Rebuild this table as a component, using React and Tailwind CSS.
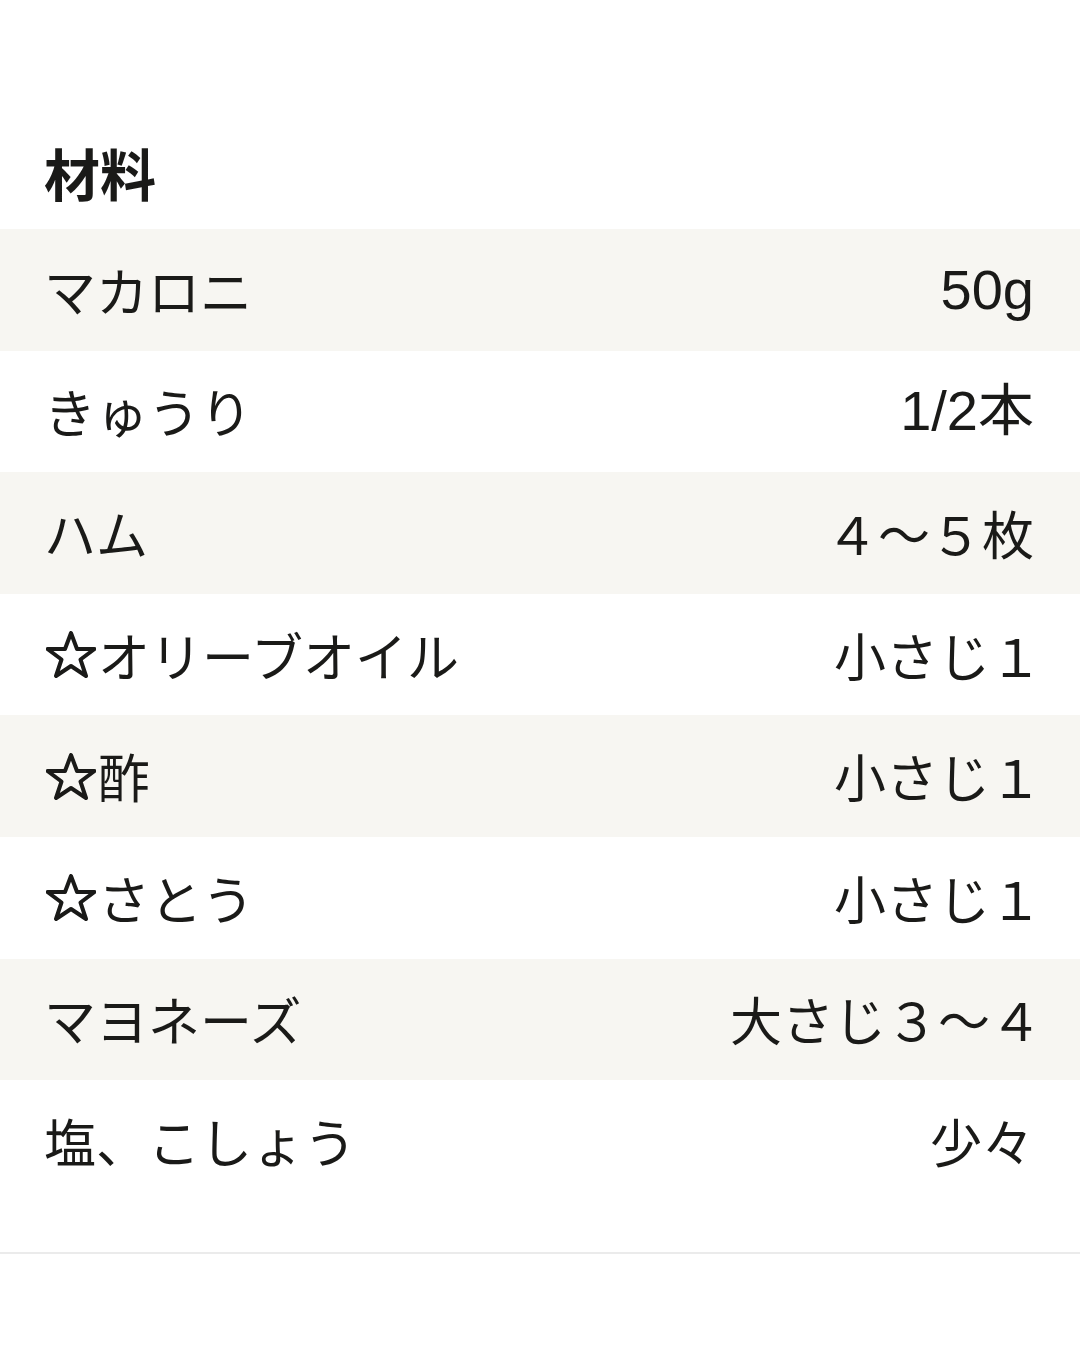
import React from "react";

const rows = [
  { name: "マカロニ", qty: "50g", latin: true },
  { name: "きゅうり", qty: "1/2本", latin: true },
  { name: "ハム", qty: "４～５枚" },
  { name: "オリーブオイル", qty: "小さじ１", star: true, shift: true },
  { name: "酢", qty: "小さじ１", star: true, shift: true },
  { name: "さとう", qty: "小さじ１", star: true, shift: true },
  { name: "マヨネーズ", qty: "大さじ３～４", shift: true },
  { name: "塩、こしょう", qty: "少々" },
];

function Star() {
  return (
    <svg viewBox="0 0 100 94" className="w-[50px] h-[47px] mr-[2px] shrink-0" aria-label="☆">
      <polygon
        points="50,4 62,36 97,36 69,57 80,90 50,70 20,90 31,57 3,36 38,36"
        fill="none"
        stroke="#1a1a18"
        strokeWidth="8"
        strokeLinejoin="round"
      />
    </svg>
  );
}

export default function App() {
  return (
    <div className="w-[1080px] h-[1350px] bg-white text-[#1a1a18] overflow-hidden font-['Noto_Sans_CJK_JP',sans-serif]">
      <div className="h-[229px] pt-[114px] px-[44px] flex items-center">
        <h1 className="text-[56px] font-bold leading-none">材料</h1>
      </div>
      <div className="flex flex-col">
        {rows.map((r, i) => (
          <div
            key={i}
            className={
              i % 2 === 0
                ? "h-[121.6px] flex items-center justify-between pl-[46px] pr-[46px] bg-[#f7f6f2]"
                : "h-[121.6px] flex items-center justify-between pl-[46px] pr-[46px] bg-white"
            }
          >
            <span className="flex items-center text-[52px] leading-none">
              {r.star && <Star />}
              <span className={r.star ? "" : "-ml-[2px]"}>{r.name}</span>
            </span>
            {r.latin ? (
              <span className="text-[56px] leading-none font-['Liberation_Sans','Noto_Sans_CJK_JP',sans-serif]">
                {r.qty}
              </span>
            ) : (
              <span className={r.shift ? "text-[52px] leading-none -mr-[8px]" : "text-[52px] leading-none"}>
                {r.qty}
              </span>
            )}
          </div>
        ))}
      </div>
      <div className="mt-[50px] border-t-2 border-[#ebebeb]" />
    </div>
  );
}
